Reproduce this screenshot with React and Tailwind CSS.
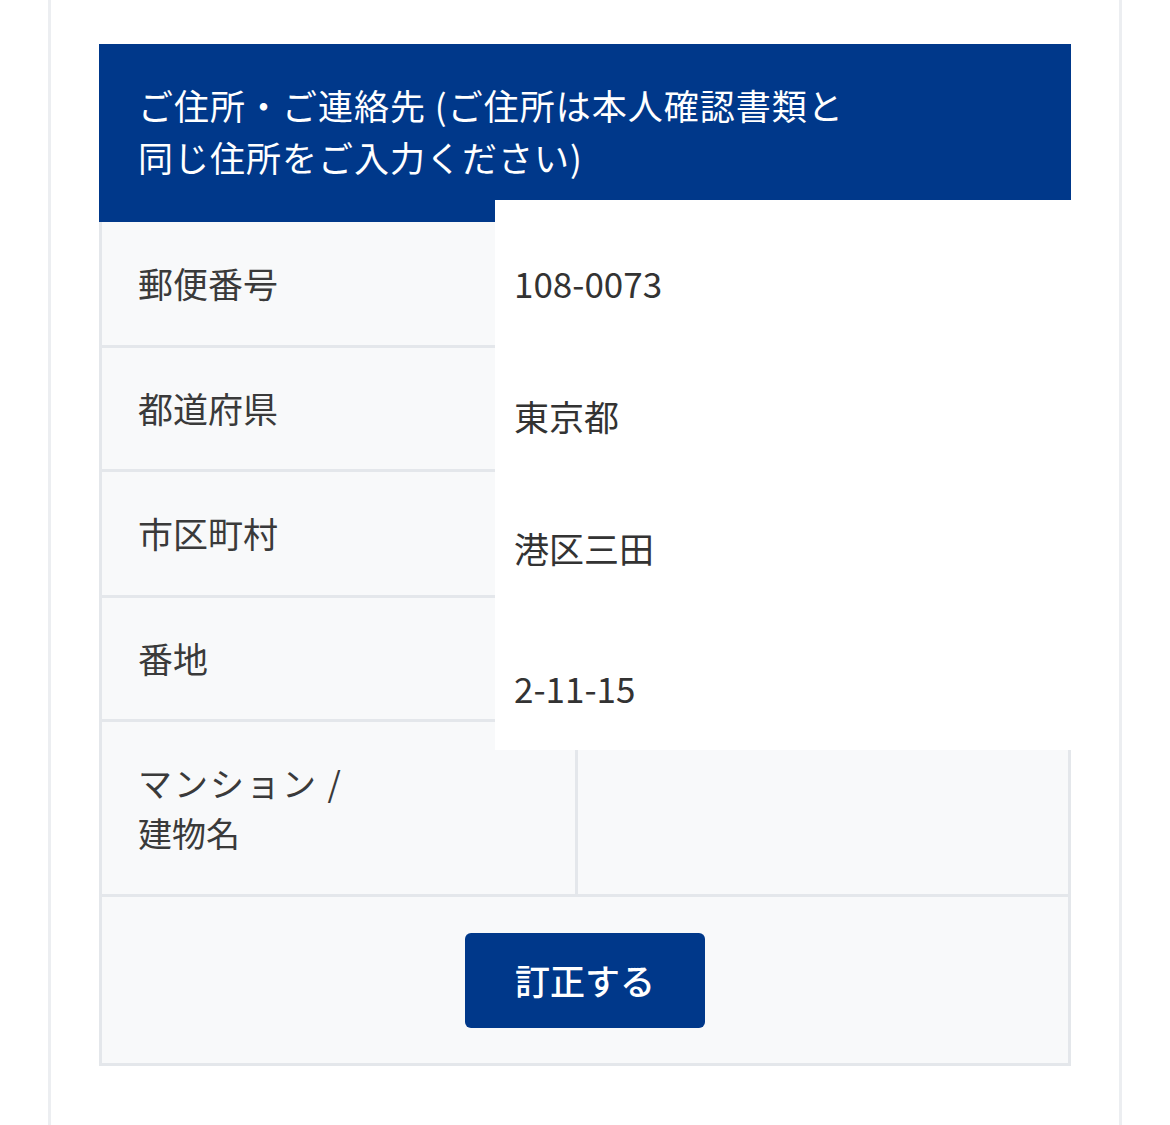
import React from "react"

const labels = [
    { text: "郵便番号", h: "h-[126px]" },
    { text: "都道府県", h: "h-[124px]" },
    { text: "市区町村", h: "h-[126px]" },
    { text: "番地", h: "h-[124px]" },
]

const values = [
    { text: "108-0073", mt: "mt-[63px]" },
    { text: "東京都", mt: "mt-[93px]" },
    { text: "港区三田", mt: "mt-[92px]" },
    { text: "2-11-15", mt: "mt-[100px]" },
]

export default function App() {
    return (
        <div className="min-h-[1125px] bg-white font-['Noto_Sans_CJK_JP','Noto_Sans',sans-serif]">
            <div className="ml-[48px] w-[1074px] min-h-[1125px] border-x-[3px] border-[#eceef1] pt-[44px] pl-[48px]">
                <div className="relative w-[972px]">
                    {/* 見出し */}
                    <div className="h-[178px] bg-[#00388a] pl-[39px] pt-[35px] text-[35px] leading-[52px] tracking-[1px] text-white">
                        ご住所・ご連絡先 (ご住所は本人確認書類と
                        <br />
                        同じ住所をご入力ください)
                    </div>

                    {/* 項目 */}
                    {labels.map((row) => (
                        <div
                            key={row.text}
                            className={`${row.h} flex border-x-[3px] border-b-[3px] border-[#e4e7eb] bg-[#f8f9fa]`}
                        >
                            <div className="w-[393px] flex items-center pl-[36px] text-[35px] text-[#3a3a3a]">
                                {row.text}
                            </div>
                        </div>
                    ))}

                    <div className="h-[175px] flex border-x-[3px] border-b-[3px] border-[#e4e7eb] bg-[#f8f9fa]">
                        <div className="w-[476px] flex items-center pl-[36px] border-r-[3px] border-[#e4e7eb] text-[34px] leading-[50px] text-[#3a3a3a]">
                            <span>
                                <span className="tracking-[2px]">マンション /</span>
                                <br />
                                建物名
                            </span>
                        </div>
                        <div className="flex-1"></div>
                    </div>

                    {/* ボタン */}
                    <div className="h-[169px] flex items-center justify-center border-x-[3px] border-b-[3px] border-[#e4e7eb] bg-[#f8f9fa]">
                        <button className="w-[240px] h-[95px] rounded-[6px] bg-[#00388a] text-white text-[35px] font-medium">
                            訂正する
                        </button>
                    </div>

                    {/* 入力値 */}
                    <div className="absolute left-[396px] top-[156px] w-[577px] h-[550px] bg-white pl-[19px] flex flex-col text-[35px] leading-[40px] text-[#333333]">
                        {values.map((v) => (
                            <div key={v.text} className={v.mt}>
                                {v.text}
                            </div>
                        ))}
                    </div>
                </div>
            </div>
        </div>
    )
}
